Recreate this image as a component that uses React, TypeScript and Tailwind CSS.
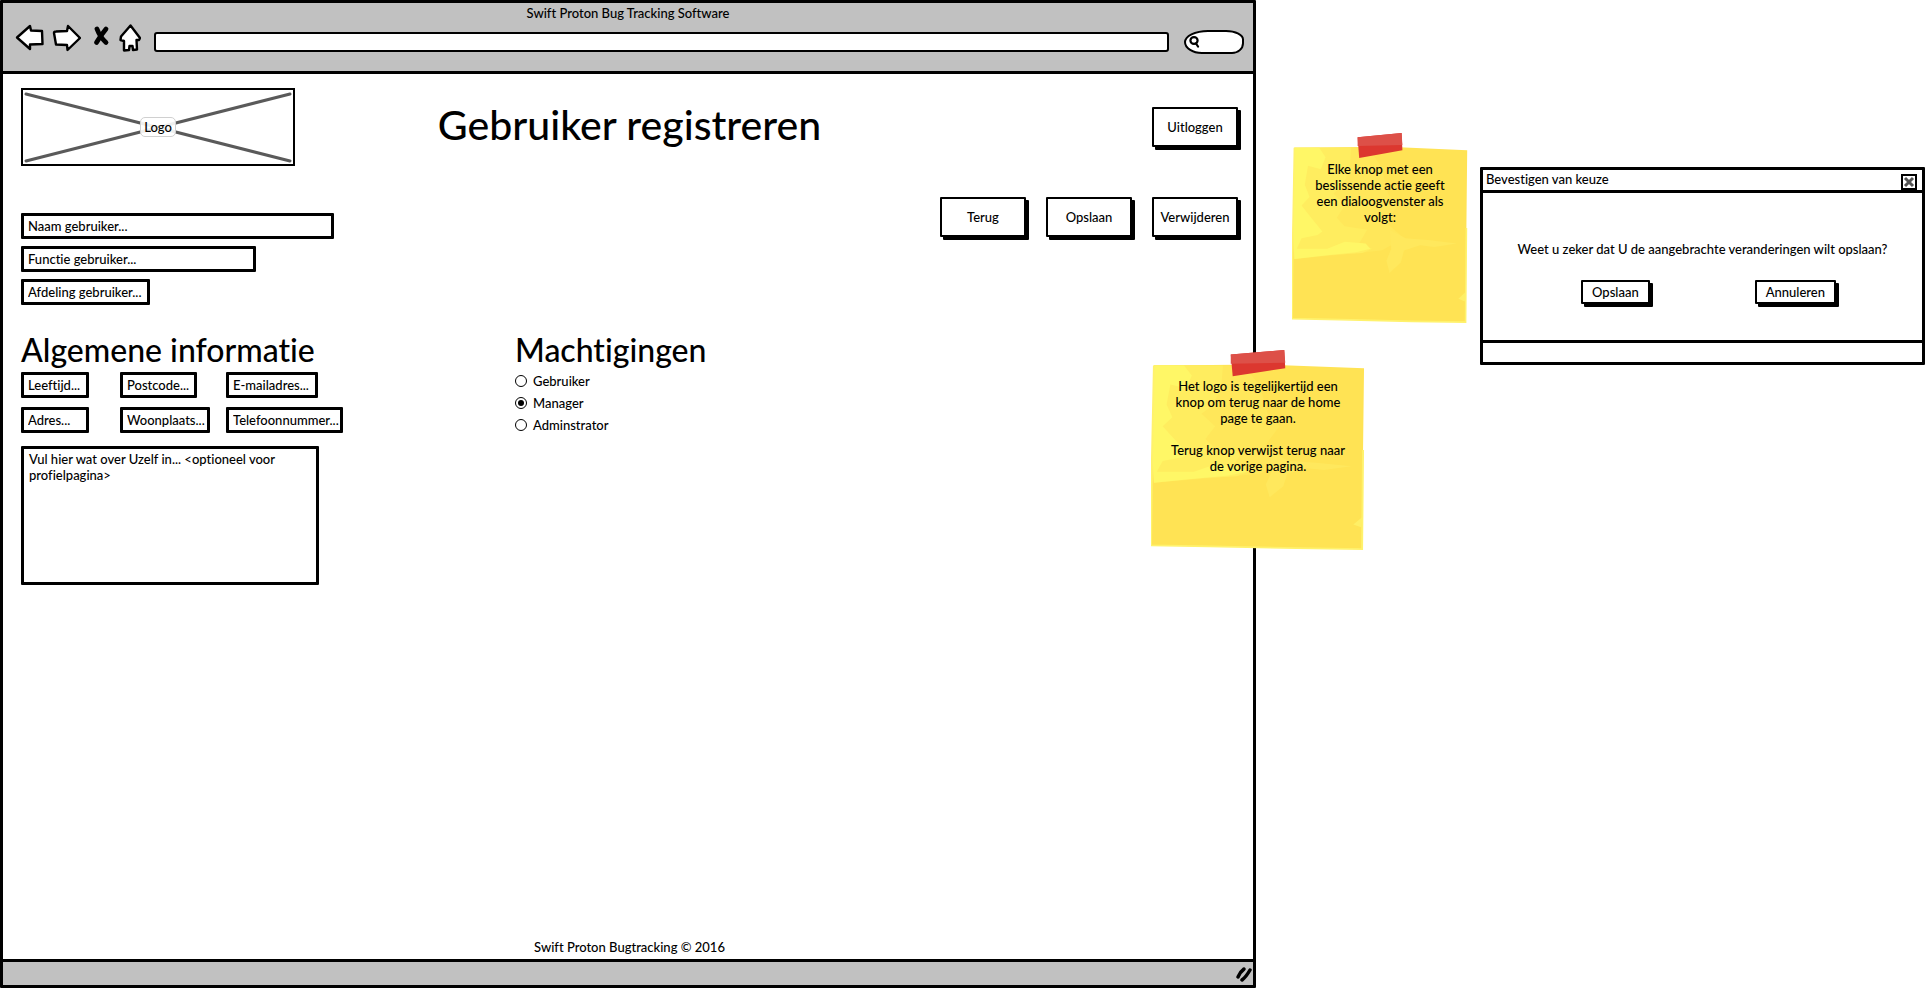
import type { ReactNode } from "react";

const field =
  "h-[26px] border-[3px] border-black rounded-[1px] bg-white pl-1 text-[13px] leading-4 text-black placeholder:text-black outline-none";

function Field({ label, width }: { label: string; width: string }) {
  return <input type="text" aria-label={label} placeholder={`${label}...`} className={`${field} ${width}`} />;
}

function BigButton({ children }: { children: ReactNode }) {
  return (
    <button
      type="button"
      className="h-10 w-[86px] rounded-[1px] border-2 border-black bg-white text-center text-[13px] leading-4 shadow-[3px_3px_0_0_#000]"
    >
      {children}
    </button>
  );
}

function DialogButton({ children }: { children: ReactNode }) {
  return (
    <button
      type="button"
      className="h-6 rounded-[1px] border-2 border-black bg-white px-[9px] text-[13px] leading-4 shadow-[3px_3px_0_0_#000]"
    >
      {children}
    </button>
  );
}

function Note({ children }: { children: ReactNode }) {
  return (
    <div className="relative h-full w-full">
      <svg className="absolute inset-0 h-full w-full" viewBox="0 0 220 220" preserveAspectRatio="none" aria-hidden="true">
        <path d="M3 17 L120 16 L219 20 L218 110 L217 219 L150 218 L60 216 L0 215 L1 120 Z" fill="#ffe354" />
        <path d="M3 17 L96 17 L112 40 L120 70 L132 84 L118 104 L140 122 L112 136 L60 141 L3 146 L1 120 Z" fill="#ffe75a" />
        <path d="M3 17 L74 17 L72 44 L62 62 L52 70 L66 84 L56 98 L66 108 L94 112 L84 128 L100 134 L88 139 L34 142 L3 146 L1 120 Z" fill="#ffed5f" />
        <path d="M3 17 L34 17 L42 28 L36 42 L20 38 L16 60 L22 74 L12 84 L24 98 L38 114 L32 118 L12 122 L6 134 L44 134 L66 126 L92 128 L98 134 L80 138 L50 141 L3 146 L1 110 Z" fill="#fff766" />
        <path d="M122 112 L142 122 L170 124 L206 128 L178 132 L160 130 L140 136 L136 150 L122 162 L118 148 L124 134 Z" fill="#ffe85d" />
        <path d="M217 184 L208 192 L216 195 Z" fill="#ffef66" />
        <path d="M3 17 L1 120 L0 215 L60 216 L150 218 L217 219 L218 110" fill="none" stroke="#fff26d" strokeWidth="2" />
        <path d="M82 5 L137 0 L138 20 L84 29 Z" fill="#dc372f" />
        <path d="M82 5 L137 0 L138 14 L82 15 Z" fill="#dd5048" />
      </svg>
      <p className="relative text-center text-[13px] leading-4 whitespace-pre-line">{children}</p>
    </div>
  );
}

function BrowserBar() {
  return (
    <header className="h-[71px] border-b-[3px] border-black bg-[#c1c1c1]">
      <div className="h-[19px] pt-[2px] text-center text-[13px] leading-4">Swift Proton Bug Tracking Software</div>
      <div className="flex h-8 items-center pr-[9px] pl-3">
        <button type="button" aria-label="Vorige" className="h-7 w-[29px]">
          <svg width="29" height="28" viewBox="0 0 29 28" fill="#fff" stroke="#000" strokeWidth="2.4" strokeLinejoin="round">
            <path d="M2 13.500 L15 2 L16 6.500 L27 7 L27.500 20 L15 20.500 L15 25 Z" />
          </svg>
        </button>
        <button type="button" aria-label="Volgende" className="ml-2 h-7 w-[29px]">
          <svg width="29" height="28" viewBox="0 0 29 28" fill="#fff" stroke="#000" strokeWidth="2.4" strokeLinejoin="round">
            <path d="M2 9 Q2 7.500 4 7.500 L15 7 L16 2 L28 14 L15.500 26 L15 21 L4 20.500 Z" />
          </svg>
        </button>
        <button type="button" aria-label="Stoppen" className="ml-3 h-7 w-[18px]">
          <svg width="18" height="28" viewBox="0 0 18 28" fill="none" stroke="#000" strokeWidth="4.8" strokeLinecap="round">
            <path d="M4 5 Q7 13 13 18.500" />
            <path d="M13 5 Q8 11 3.500 18.500" />
          </svg>
        </button>
        <button type="button" aria-label="Startpagina" className="ml-2 h-7 w-[22px]">
          <svg width="22" height="28" viewBox="0 0 22 28" fill="#fff" stroke="#000" strokeWidth="2.4" strokeLinejoin="round">
            <path d="M11.500 1.500 L21 14 L20 16 L17.500 16 L18 25.500 L14 26 L13.500 22 L10.500 22 L10 26 L5 26.500 L5 17 L1.500 16 L2 12.500 Z" />
          </svg>
        </button>
        <input
          type="text"
          aria-label="Adresbalk"
          className="mt-2 ml-[13px] h-5 min-w-0 flex-1 rounded-[3px] border-2 border-black bg-white px-1 text-[13px] outline-none"
        />
        <label className="mt-[7px] ml-[15px] flex h-6 w-[60px] items-center rounded-[40%_30%_20%_30%/50%_40%_45%_50%] border-2 border-black bg-white pl-[3px]">
          <svg width="11" height="13" viewBox="0 0 11 13" fill="none" stroke="#000" strokeWidth="2.2" strokeLinecap="round" aria-hidden="true">
            <ellipse cx="5" cy="5.500" rx="3.600" ry="3.400" />
            <path d="M7 8.500 L9 11.500" />
          </svg>
          <input type="search" aria-label="Zoeken" className="w-8 min-w-0 bg-transparent text-[13px] outline-none" />
        </label>
      </div>
    </header>
  );
}

function Logo() {
  return (
    <a href="#home" className="relative flex h-[78px] w-[274px] items-center justify-center border-2 border-black bg-white">
      <svg className="absolute inset-0 h-full w-full" viewBox="0 0 270 74" preserveAspectRatio="none" stroke="#5a5a5a" strokeWidth="3" strokeLinecap="round" aria-hidden="true">
        <path d="M3 4 L267 71 M267 4 L3 71" />
      </svg>
      <span className="relative rounded-[5px] border border-[#d0d0d0] bg-white/90 px-[3px] text-[13px] leading-[18px]">Logo</span>
    </a>
  );
}

function Permissions() {
  return (
    <fieldset>
      <legend className="text-[32px] leading-10">Machtigingen</legend>
      {["Gebruiker", "Manager", "Adminstrator"].map((role) => (
        <label key={role} className="flex h-[22px] items-center gap-[6px] text-[13px] leading-4">
          <input
            type="radio"
            name="role"
            defaultChecked={role === "Manager"}
            className="h-3 w-3 appearance-none rounded-full border border-black bg-white bg-clip-content p-[2px] checked:bg-black"
          />
          {role}
        </label>
      ))}
    </fieldset>
  );
}

function ConfirmDialog() {
  return (
    <section role="dialog" aria-label="Bevestigen van keuze" className="flex h-[198px] flex-col rounded-[1px] border-[3px] border-black bg-white">
      <div className="flex h-[23px] items-center justify-between border-b-[3px] border-black pr-[5px] pl-[3px]">
        <span className="pb-[2px] text-[13px] leading-4">Bevestigen van keuze</span>
        <button type="button" aria-label="Sluiten" className="mt-1 h-4 w-4 border-2 border-black bg-white">
          <svg width="12" height="12" viewBox="0 0 12 12" stroke="#555" strokeWidth="3" aria-hidden="true">
            <path d="M2 2 L10 10 M10 2 L2 10" />
          </svg>
        </button>
      </div>
      <div className="flex-1 pt-12 text-center text-[13px] leading-4">
        <p>Weet u zeker dat U de aangebrachte veranderingen wilt opslaan?</p>
        <div className="mt-[23px] flex justify-center gap-[105px] pl-3">
          <DialogButton>Opslaan</DialogButton>
          <DialogButton>Annuleren</DialogButton>
        </div>
      </div>
      <div className="h-[22px] border-t-[3px] border-black" />
    </section>
  );
}

export default function App() {
  return (
    <div className="flex min-h-screen bg-white font-['Lato','Open_Sans',sans-serif] font-medium text-black [font-variant-ligatures:none]">
      <div className="flex min-w-0 flex-1 flex-col rounded-[1px] border-[3px] border-black">
        <BrowserBar />
        <main className="flex flex-1 flex-col pt-[14px] pr-[15px] pl-[18px]">
          <div className="grid grid-cols-[1fr_auto_1fr] items-center">
            <Logo />
            <h1 className="pb-1 text-[41px] leading-[48px]">Gebruiker registreren</h1>
            <div className="flex justify-end">
              <BigButton>Uitloggen</BigButton>
            </div>
          </div>
          <div className="mt-[31px] flex items-start justify-between">
            <div className="flex flex-col gap-[7px] pt-4">
              <Field label="Naam gebruiker" width="w-[313px]" />
              <Field label="Functie gebruiker" width="w-[235px]" />
              <Field label="Afdeling gebruiker" width="w-[129px]" />
            </div>
            <div className="flex gap-5">
              <BigButton>Terug</BigButton>
              <BigButton>Opslaan</BigButton>
              <BigButton>Verwijderen</BigButton>
            </div>
          </div>
          <div className="mt-[25px] grid grid-cols-[494px_1fr]">
            <section>
              <h2 className="mb-[2px] text-[32px] leading-10">Algemene informatie</h2>
              <div className="grid grid-cols-[99px_106px_auto] justify-start gap-y-[9px]">
                <Field label="Leeftijd" width="w-[68px]" />
                <Field label="Postcode" width="w-[77px]" />
                <Field label="E-mailadres" width="w-[92px]" />
                <Field label="Adres" width="w-[68px]" />
                <Field label="Woonplaats" width="w-[90px]" />
                <Field label="Telefoonnummer" width="w-[117px]" />
              </div>
              <textarea
                aria-label="Over uzelf"
                placeholder="Vul hier wat over Uzelf in... <optioneel voor profielpagina>"
                className="mt-[13px] block h-[139px] w-[298px] resize-none rounded-[1px] border-[3px] border-black px-[5px] py-[2px] text-[13px] leading-4 outline-none placeholder:text-black"
              />
            </section>
            <Permissions />
          </div>
          <p className="mt-auto pb-1 text-center text-[13px] leading-4">Swift Proton Bugtracking © 2016</p>
        </main>
        <footer className="flex h-[26px] items-center justify-end border-t-[3px] border-black bg-[#c1c1c1]">
          <svg width="18" height="16" viewBox="0 0 18 16" fill="none" stroke="#000" strokeWidth="3.5" strokeLinecap="round" aria-hidden="true">
            <path d="M3 11 Q5 6 9 3" />
            <path d="M7 14 Q11 11 15 4" />
          </svg>
        </footer>
      </div>
      <aside className="relative flex w-[669px] shrink-0 items-start gap-3 pt-[133px] pl-[36px]">
        <div className="h-[190px] w-[176px] shrink-0">
          <Note>
            <span className="block px-3 pt-7">Elke knop met een beslissende actie geeft een dialoogvenster als volgt:</span>
          </Note>
        </div>
        <div className="min-w-0 flex-1 pt-[34px]">
          <ConfirmDialog />
        </div>
        <div className="absolute top-[350px] -left-[105px] h-[200px] w-[214px]">
          <Note>
            <span className="block px-3 pt-7">
              {"Het logo is tegelijkertijd een knop om terug naar de home page te gaan.\n\nTerug knop verwijst terug naar de vorige pagina."}
            </span>
          </Note>
        </div>
      </aside>
    </div>
  );
}
